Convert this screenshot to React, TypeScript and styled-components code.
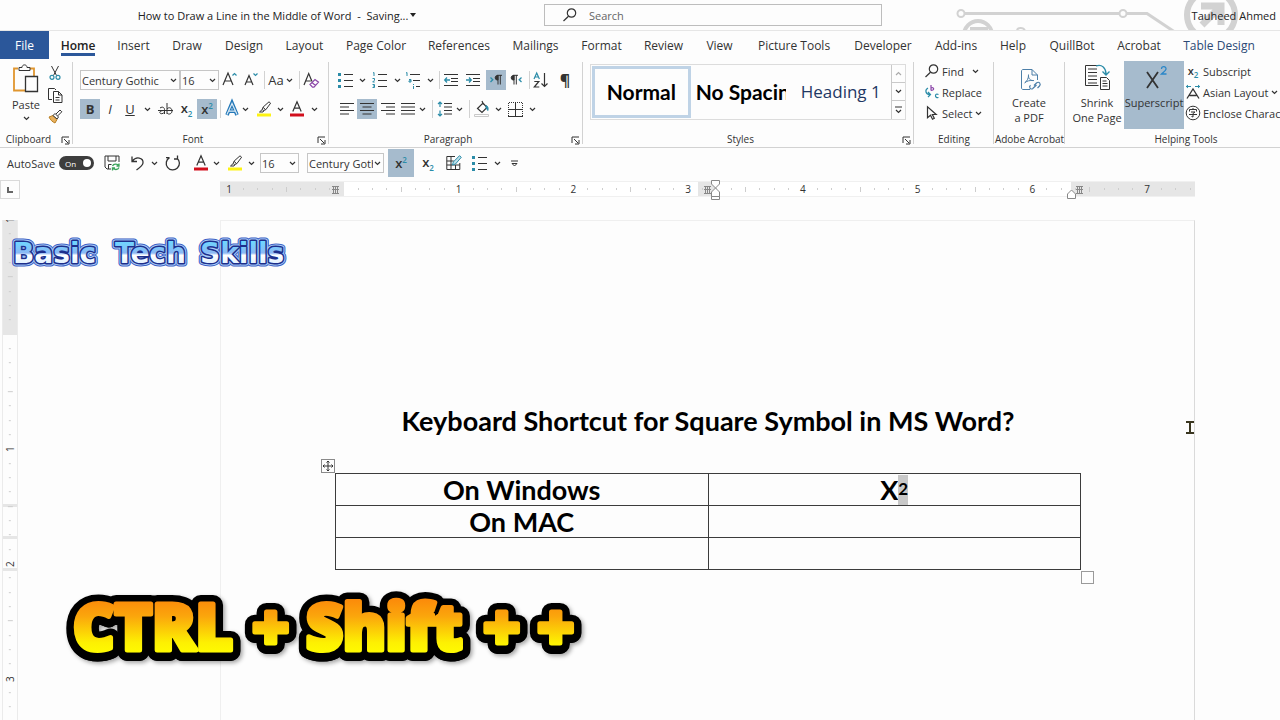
import React from 'react';
import styled, { createGlobalStyle, css } from 'styled-components';

const ink = '#333333';
const teal = '#2b8ca8';
const selected = '#a6bbcd';
const line = '#d2d2d2';
const paper = '#fdfdfd';

const GlobalStyle = createGlobalStyle`
  * { box-sizing: border-box; }
  body {
    margin: 0;
    background: ${paper};
    color: ${ink};
    font-family: "Open Sans", "Noto Sans", sans-serif;
    font-size: 11px;
    line-height: 15px;
  }
  button, input, select { font: inherit; color: inherit; margin: 0; padding: 0; }
  button { background: none; border: 0; white-space: nowrap; }
  svg { display: block; overflow: visible; flex: none; }
`;

const Window = styled.div`
  height: 100vh;
  display: flex;
  flex-direction: column;
  overflow: hidden;
  position: relative;
`;

/* ---------- title bar ---------- */

const TitleBar = styled.header`
  position: relative;
  display: grid;
  grid-template-columns: 544fr 338px 398fr;
  align-items: center;
  height: 31px;
  border-bottom: 1px solid #e6e6e6;
  overflow: hidden;
`;

const DocTitle = styled.button`
  display: flex;
  align-items: center;
  justify-content: center;
  gap: 2px;
  padding-left: 10px;
  color: #222;
  white-space: pre;
`;

const SearchBox = styled.label`
  display: flex;
  align-items: center;
  gap: 12px;
  height: 22px;
  padding-left: 18px;
  background: ${paper};
  border: 1px solid #bdbdbd;
  input {
    flex: 1;
    border: 0;
    background: none;
    outline: 0;
  }
  input::placeholder { color: #666; opacity: 1; }
`;

const Circuit = styled.svg`
  position: absolute;
  top: 0;
  right: 0;
`;

const UserName = styled.button`
  position: relative;
  justify-self: end;
  padding-right: 4px;
  color: #222;
`;

/* ---------- tabs ---------- */

const Tabs = styled.nav`
  display: flex;
  height: 30px;
  overflow: hidden;
`;

const Tab = styled.button<{ $w: number; $kind?: 'file' | 'active' | 'context' }>`
  flex: none;
  width: ${(p) => p.$w}px;
  height: 28px;
  font-size: 12px;
  ${(p) => p.$kind === 'file' && css`background: #2b579a; color: #fff;`}
  ${(p) => p.$kind === 'context' && css`color: #2c4a75;`}
  ${(p) => p.$kind === 'active' && css`
    color: #222;
    font-weight: 600;
    span { display: inline-block; height: 21px; padding-top: 3px; border-bottom: 3px solid #2b579a; }
  `}
`;

/* ---------- ribbon ---------- */

const Ribbon = styled.section`
  display: flex;
  flex: none;
  height: 87px;
  border-bottom: 1px solid ${line};
  overflow: hidden;
`;

const Group = styled.div<{ $w: number; $grow?: boolean }>`
  flex: ${(p) => (p.$grow ? '1 0' : '0 0')} ${(p) => p.$w}px;
  display: flex;
  flex-direction: column;
  position: relative;
  &::after {
    content: '';
    position: absolute;
    right: 0;
    top: 1px;
    height: 82px;
    border-right: 1px solid ${line};
  }
`;

const GroupBody = styled.div<{ $column?: boolean; $pad?: number }>`
  flex: 1;
  display: flex;
  flex-direction: ${(p) => (p.$column ? 'column' : 'row')};
  padding-left: ${(p) => p.$pad ?? 7}px;
`;

const GroupFooter = styled.div`
  display: flex;
  justify-content: center;
  height: 15px;
  font-size: 10px;
  white-space: nowrap;
  span { flex: 1; text-align: center; }
  button { padding: 2px 3px 0 4px; }
`;

const ToolRow = styled.div<{ $top?: number }>`
  display: flex;
  align-items: center;
  height: 20px;
  margin-top: ${(p) => p.$top ?? 0}px;
`;

const Tool = styled.button<{ $w?: number; $h?: number; $on?: boolean }>`
  flex: none;
  display: flex;
  align-items: center;
  justify-content: center;
  width: ${(p) => p.$w ?? 20}px;
  height: ${(p) => p.$h ?? 20}px;
  background: ${(p) => (p.$on ? selected : 'none')};
`;

const Divider = styled.span<{ $w?: number }>`
  flex: none;
  width: ${(p) => p.$w ?? 8}px;
  height: 18px;
  background: linear-gradient(${line}, ${line}) center / 1px 100% no-repeat;
`;

const SelectBox = styled.label<{ $w: number }>`
  flex: none;
  display: grid;
  align-items: center;
  width: ${(p) => p.$w}px;
  height: 20px;
  border: 1px solid #c6c6c6;
  select, svg { grid-area: 1 / 1; }
  svg { justify-self: end; margin-right: 2px; pointer-events: none; }
  select {
    appearance: none;
    width: calc(100% - 10px);
    height: 18px;
    padding-left: 1px;
    border: 0;
    background: none;
    text-overflow: clip;
  }
`;

const BigButton = styled.button<{ $w: number; $on?: boolean }>`
  display: flex;
  flex: none;
  flex-direction: column;
  align-items: center;
  width: ${(p) => p.$w}px;
  height: 68px;
  padding-top: 3px;
  background: ${(p) => (p.$on ? selected : 'none')};
  svg { margin-bottom: 3px; }
`;

const SmallStack = styled.div`
  display: flex;
  flex-direction: column;
  gap: 1px;
`;

const LabelledTool = styled.button`
  display: flex;
  align-items: center;
  gap: 3px;
  height: 20px;
`;

const Gallery = styled.div`
  flex: 1;
  display: flex;
  height: 56px;
  margin: 3px 8px 0 0;
  border: 1px solid #dcdcdc;
`;

const StyleCell = styled.button<{ $w: number; $on?: boolean; $heading?: boolean }>`
  flex: 1 1 ${(p) => p.$w}px;
  min-width: 0;
  overflow: hidden;
  margin: 1px;
  text-align: ${(p) => (p.$heading || p.$on ? 'center' : 'left')};
  border: 3px solid ${(p) => (p.$on ? '#bfd3e6' : 'transparent')};
  color: ${(p) => (p.$heading ? '#1f3864' : '#000')};
  font-family: ${(p) => (p.$heading ? '"Open Sans"' : 'Lato')}, sans-serif;
  font-weight: ${(p) => (p.$heading ? 400 : 700)};
  font-size: ${(p) => (p.$heading ? 17 : 21)}px;
  line-height: 24px;
`;

const GalleryScroll = styled.div`
  display: grid;
  grid-template-rows: 1fr 1fr 1fr;
  width: 14px;
  button { display: grid; place-items: center; border: 1px solid #c9c9c9; border-width: 0 0 1px 1px; }
  button:last-child { border-bottom: 0; }
`;

/* ---------- quick access toolbar ---------- */

const QuickAccess = styled.section`
  display: flex;
  flex: none;
  align-items: center;
  height: 30px;
  padding-left: 7px;
`;

const AutoSave = styled.label`
  display: flex;
  align-items: center;
  gap: 4px;
  width: 93px;
`;

const Switch = styled.span`
  display: flex;
  align-items: center;
  justify-content: space-between;
  width: 35px;
  height: 14px;
  padding: 0 3px 0 6px;
  border-radius: 7px;
  background: #3d3d3d;
  color: #fff;
  font-size: 8px;
  position: relative;
  input { position: absolute; inset: 0; opacity: 0; }
  &::after { content: ''; width: 8px; height: 8px; border-radius: 50%; background: #fff; }
`;

const Space = styled.span<{ $w: number }>`
  flex: none;
  width: ${(p) => p.$w}px;
`;

/* ---------- document area ---------- */

const Workspace = styled.main`
  flex: 1;
  min-height: 0;
  display: grid;
  grid-template-columns: 220px 1fr 85px;
  grid-template-rows: 42px 1fr;
`;

const TabStop = styled.button`
  width: 20px;
  height: 19px;
  margin-top: 2px;
  display: grid;
  place-items: center;
  border: 1px solid #dadada;
`;

const HRuler = styled.div`
  position: relative;
  height: 16px;
  margin-top: 3px;
  border-top: 1px solid #f0f0f0;
  border-bottom: 1px solid #f0f0f0;
  background: linear-gradient(to right, #e6e6e6 124px, #fff 124px 478px, #e6e6e6 478px 495px, #fff 495px 851px, #e6e6e6 851px);
`;

const Strip = styled.div<{ $vertical?: boolean }>`
  display: flex;
  ${(p) => p.$vertical
    ? css`flex-direction: column; height: 516px; margin-top: -7px;`
    : css`height: 14px; margin: 0 -2px 0 2px;`}
`;

const Mark = styled.span<{ $vertical?: boolean; $kind: 'number' | 'half' | 'dot' | 'none' }>`
  flex: 1;
  display: grid;
  place-items: center;
  min-width: 0;
  min-height: 0;
  font-size: 10px;
  line-height: 12px;
  ${(p) => p.$vertical && css`transform: rotate(-90deg);`}
  &::before {
    content: ${(p) => (p.$kind === 'half' || p.$kind === 'dot' ? "''" : 'none')};
    width: 1px;
    height: ${(p) => (p.$kind === 'half' ? 5 : 2)}px;
    background: #cdcdcd;
  }
`;

const RulerPin = styled.svg<{ $x: number; $y: number }>`
  position: absolute;
  left: ${(p) => p.$x}px;
  top: ${(p) => p.$y}px;
`;

const VRuler = styled.div`
  position: relative;
  width: 16px;
  margin-left: 2px;
  overflow: hidden;
  border: 1px solid #ebebeb;
  border-width: 0 1px;
  background: linear-gradient(#e6e6e6 115px, transparent 115px 284px, #e6e6e6 284px 287px, transparent 287px 316px,
    #e6e6e6 316px 319px, transparent 319px 348px, #e6e6e6 348px 351px, transparent 351px);
`;

const Sheet = styled.article`
  position: relative;
  border: 1px solid #efefef;
  border-right-color: #dadada;
  border-bottom: 0;
  padding: 182px 113px 0 114px;
  color: #000;
  font-family: Lato, "Open Sans", sans-serif;
`;

const Heading = styled.h1`
  margin: 0 0 34px;
  font-size: 27px;
  line-height: 36px;
  font-weight: 700;
  text-align: center;
  white-space: nowrap;
`;

const TableFrame = styled.div`
  position: relative;
`;

const DocTable = styled.table`
  width: 100%;
  table-layout: fixed;
  border-collapse: collapse;
  td {
    height: 32px;
    padding: 1px 0 0;
    border: 1px solid #3c3c3c;
    text-align: center;
    font-size: 27px;
    line-height: 30px;
    font-weight: 700;
  }
`;

const Power = styled.span`
  display: inline-block;
  height: 30px;
  vertical-align: top;
  background: #c8c8c8;
  font-size: 17px;
  line-height: 27px;
`;

const MoveHandle = styled.button`
  position: absolute;
  left: -14px;
  top: -14px;
  border: 1px solid #8a8a8a;
`;

const ResizeHandle = styled.span`
  position: absolute;
  right: -13px;
  bottom: -14px;
  width: 13px;
  height: 13px;
  border: 1px solid #9a9a9a;
`;

const Pointer = styled.svg`
  position: absolute;
  right: 0;
  top: 200px;
`;

const Overlay = styled.svg<{ $x: number; $y: number }>`
  position: absolute;
  left: ${(p) => p.$x}px;
  top: ${(p) => p.$y}px;
  pointer-events: none;
`;

/* ---------- icons ---------- */

type IconProps = { w?: number; h?: number; sw?: number; color?: string; children: React.ReactNode };
const Icon = ({ w = 16, h = 16, sw = 1, color = ink, children }: IconProps) => (
  <svg width={w} height={h} viewBox={`0 0 ${w} ${h}`} fill="none" stroke={color} strokeWidth={sw} aria-hidden="true">
    {children}
  </svg>
);

const Chevron = ({ up, color }: { up?: boolean; color?: string }) => (
  <Icon w={7} h={5} sw={1.2} color={color}><path d={up ? 'M1 4l2.5-2.5L6 4' : 'M1 1l2.5 2.5L6 1'} /></Icon>
);

const Caret = ({ w = 12 }: { w?: number }) => (
  <Tool $w={w} aria-label="More options"><Chevron /></Tool>
);

const Launcher = () => (
  <button aria-label="Open dialog">
    <Icon w={9} h={9}><path d="M1 7V1h7M3 3l4 4M8 4v4H4" /></Icon>
  </button>
);

const Glyph = styled.span<{ $size?: number; $bold?: boolean }>`
  font-size: ${(p) => p.$size ?? 13}px;
  font-weight: ${(p) => (p.$bold ? 700 : 400)};
  line-height: 16px;
`;

const Script = styled.span<{ $up?: boolean; $size?: number }>`
  font-size: ${(p) => p.$size ?? 13}px;
  font-weight: 600;
  line-height: 16px;
  small {
    font-size: 8px;
    line-height: 8px;
    color: ${teal};
    vertical-align: ${(p) => (p.$up ? 'super' : 'sub')};
  }
`;

const BulletsIcon = () => (
  <Icon><path d="M6 2.5h9M6 8.5h9M6 14.5h9" /><path d="M0 2.5h3M0 8.5h3M0 14.5h3" stroke={teal} strokeWidth={3} /></Icon>
);
const NumbersIcon = () => (
  <Icon><path d="M6 2.5h9M6 8.5h9M6 14.5h9" />
    <path d="M1 1l1-.5V4M.5 6.5h2v1.7L.7 10h2M.5 12.5h2v3h-2M1 14h1.5" stroke={teal} /></Icon>
);
const MultiIcon = () => (
  <Icon><path d="M5 2.5h10M8 8.5h7M11 14.5h4" />
    <path d="M1 1l1-.5V4M4 7.5h2v2.500H4v-1.200h2M8.500 12v1M8.500 14v3" stroke={teal} /></Icon>
);
const IndentIcon = ({ out }: { out?: boolean }) => (
  <Icon w={14} h={14}><path d="M0 1.500h14M7 5.500h7M7 8.500h7M0 12.500h14" />
    <path d={out ? 'M6 7H1M3 4.500L.7 7 3 9.500' : 'M0 7h5M3 4.500L5.300 7 3 9.500'} stroke={teal} strokeWidth={1.300} /></Icon>
);
const AlignIcon = ({ d }: { d: string }) => <Icon w={14} h={14} sw={1.2}><path d={d} /></Icon>;

const Pilcrow = ({ dir }: { dir?: 'ltr' | 'rtl' }) => (
  <Icon w={12} h={12}>
    <g transform={dir === 'ltr' ? 'translate(4 0)' : ''}>
      <path d="M4 1.500H3a2.300 2.300 0 000 4.500h1z" fill={ink} /><path d="M4 1v9.500M6.300 1v9.500M3 1.300h5" />
    </g>
    {dir === 'ltr' && <path d="M.5 3.500l2.300 2.200L.5 8" stroke={teal} strokeWidth={1.300} />}
    {dir === 'rtl' && <path d="M11.500 3.500L9.200 5.700 11.500 8" stroke={teal} strokeWidth={1.300} />}
  </Icon>
);

const HighlightIcon = () => (
  <Icon>
    <path d="M13 .8l1.600 1.400-4.800 6.500-2.500.8-1.100-1 .9-2.400zM7 6.300l2.700 2.400M6.200 8.500L3.500 11H7l1-1.500" />
    <path d="M1 14h14" stroke="#fdf313" strokeWidth={3} />
  </Icon>
);
const FontColorIcon = () => (
  <Icon>
    <path d="M3.800 10.500L8 .8l4.200 9.700M5.200 7.200h5.600" strokeWidth={1.200} />
    <path d="M1 14h14" stroke="#d20f1c" strokeWidth={3} />
  </Icon>
);
const EffectsIcon = () => (
  <Icon>
    <path d="M3 14L8 2l5 12M4.800 10.200h6.400" stroke="#2378b8" strokeWidth={3.600} />
    <path d="M3 13.600L8 2.500l5 11.100M4.800 10.200h6.400" stroke="#dceaf5" strokeWidth={1.200} />
  </Icon>
);
const PasteIcon = () => (
  <Icon w={28} h={30}>
    <path d="M6 4.500H2v22h11M17 4.500h5v8" stroke="#e0962f" strokeWidth={1.800} />
    <path d="M7 6.500V3.500h3c0-3.500 5-3.500 5 0h3v3z" fill={paper} />
    <path d="M13.500 12.500h12v15h-12z" fill={paper} strokeWidth={1.300} />
  </Icon>
);
const CutIcon = () => (
  <Icon w={12} h={14}>
    <path d="M2.500 0l5 9.500M9.500 0l-5 9.500" />
    <circle cx="3" cy="11.300" r="2" stroke={teal} strokeWidth={1.200} /><circle cx="9" cy="11.300" r="2" stroke={teal} strokeWidth={1.200} />
  </Icon>
);
const CopyIcon = () => (
  <Icon w={15} h={15}>
    <path d="M4 11.500H.5V.5h6L8 2" /><path d="M5.500 3.500h5l3.500 3.500v7.500H5.500zM10.500 3.500V7H14M7.500 9.500h4M7.500 12h4" />
  </Icon>
);
const PainterIcon = () => (
  <Icon w={14} h={14}>
    <path d="M1 8l4-1.500 4 4L7 14C4.500 13 2.500 11 1 8z" fill="#e8b15e" stroke="#b87f24" />
    <path d="M5 6.500L7 4.500 10.500 8 9 10zM8 5l4-4 1.800 1.800-4 4" fill={paper} />
  </Icon>
);
const ClearIcon = () => (
  <Icon>
    <path d="M1 13L5.700 1.500 9 9.500M2.800 9h5" strokeWidth={1.200} />
    <path d="M7 12.500l5-5 3.500 2.700-4.500 5H9.500zM9 10.500l3.500 3" stroke="#8b45a8" strokeWidth={1.200} />
  </Icon>
);
const SizeIcon = ({ up }: { up?: boolean }) => (
  <Icon>
    <path d={up ? 'M1 13L6 1l5 12M2.800 9h6.400' : 'M2 13L6 3.500 10 13M3.500 10h5'} strokeWidth={1.200} />
    <path d={up ? 'M10.500 3.500l2-2 2 2' : 'M10.500 1.500l2 2 2-2'} stroke={teal} strokeWidth={1.200} />
  </Icon>
);
const SortIcon = () => (
  <Icon>
    <path d="M1 7l2.700-6 2.700 6M1.900 5h3.600" stroke={teal} strokeWidth={1.200} />
    <path d="M1.300 9.500h4.500L1.300 15h5M11.500 1v13.500M8.500 11.500l3 3 3-3" strokeWidth={1.200} />
  </Icon>
);
const SpacingIcon = () => (
  <Icon><path d="M7 2.500h8M7 6h8M7 9.500h8M7 13h8" />
    <path d="M3 1v5M1 3l2-2 2 2M3 9.500V15M1 13l2 2 2-2" stroke={teal} strokeWidth={1.200} /></Icon>
);
const ShadingIcon = () => (
  <Icon>
    <path d="M3.500 7.500L9 2l4 4.500-5 5zM8 0l1.500 3.500" strokeWidth={1.200} />
    <path d="M12 4.500c2 .5 2.500 3 1.800 5L12 6.500z" fill={teal} stroke={teal} /><path d="M.5 13.500h14v2H.5z" stroke="#c9c9c9" />
  </Icon>
);
const BordersIcon = () => (
  <Icon w={15} h={15}>
    <path d="M.5 14V.5h14V14" strokeDasharray="1 1" /><path d="M0 14.500h15M7.500 1v13M1 7.500h13" />
  </Icon>
);
const LensIcon = () => <Icon w={14} h={14} sw={1.2}><circle cx="8.500" cy="5" r="4.200" /><path d="M5.500 8.200L.5 13" /></Icon>;
const ReplaceIcon = () => (
  <Icon w={14} h={14}>
    <path d="M6 0v5.500M6 3c3-1.500 4 2.500 0 2.500" stroke="#8b45a8" strokeWidth={1.200} />
    <path d="M3 3C-.5 5 .5 9.500 5 9.500M3 7l2.500 2.500L3 12M13.500 9.500c-4-2-4 4 0 3" stroke={teal} strokeWidth={1.200} />
  </Icon>
);
const SelectIcon = () => <Icon w={14} h={14} sw={1.2}><path d="M2.500.8v11l3-2.600 2 4 1.800-.9-2-3.800h3.900z" /></Icon>;
const PdfIcon = () => (
  <Icon w={22} h={24} color="#4d7fa8">
    <path d="M10 21.500H3c-.8 0-1.500-.700-1.500-1.500V3c0-.8.7-1.500 1.500-1.500h9L17.500 7v5M12 1.500V7h5.500" />
    <path d="M4.500 15c2-1 4.500-5 4-8.500M8.500 8c0 3.500 3 5 5.500 4.500M5 14.500c2-1.500 5-2.300 8-2" />
    <path d="M14 17.500l2.500-2.500c1-1 2.500-1 3.200 0s.8 2-.2 3l-2 2M16.500 17l-3.500 3.300c-1 1-2.400.9-3-.1-.7-1-.5-2 .5-2.900" strokeWidth={1.200} />
  </Icon>
);
const ShrinkIcon = () => (
  <Icon w={27} h={27}>
    <path d="M14 1.500H1.500v20h13" /><path d="M4 5h9M4 8.500h9M4 12h9M4 15.500h9M4 19h9" />
    <path d="M16.500 13.500h6l3 3v9h-9zM18.500 17h4M18.500 19.500h5M18.500 22h5" />
    <path d="M12 2c6-2 10 2 10 8M18.500 7.500L22 11l3.500-3.500" stroke={teal} strokeWidth={1.300} />
  </Icon>
);
const SuperIcon = () => (
  <Icon w={26} h={27}>
    <path d="M6 8l11 16M17 8L6 24" strokeWidth={1.800} />
    <path d="M20.500 5c0-3.500 5-3 4.500.2-.3 1.800-2.500 2.800-4.500 4.800h5" stroke="#2a86c8" strokeWidth={1.300} />
  </Icon>
);
const AsianIcon = () => (
  <Icon w={14} h={14}>
    <path d="M1 13.500L7 4l6 9.500M3.500 10.500h7" strokeWidth={1.300} />
    <path d="M5 1.500H0M2 0L.3 1.500 2 3M9 1.500h5M12 0l1.700 1.500L12 3" stroke={teal} />
  </Icon>
);
const EncloseIcon = () => (
  <Icon w={14} h={14}>
    <circle cx="7" cy="7" r="6.800" /><path d="M7 2v1.500M3.500 5.500v-2h7v2M5 6h4L7 7.500V11l-1.500-.5M3 8.500h8" />
  </Icon>
);
const SaveIcon = () => (
  <Icon>
    <path d="M7 14H3L1 12V1h14v6M4 1v5h8V1M4.500 14V9.500h3" />
    <path d="M8.500 11c1-2.500 5-2.500 6.300-.3M15 8.500v2.500h-2.500M15 12.500c-1 2.700-5 2.500-6.300.5M8.500 15.500V13H11" stroke="#3da35b" strokeWidth={1.300} />
  </Icon>
);
const UndoIcon = () => <Icon sw={1.3}><path d="M2 1.500v5h5M2.300 6.200C6 1 13.500 2.500 13 8c-.2 2.500-3 4.500-6.500 7" /></Icon>;
const RedoIcon = () => <Icon sw={1.300}><path d="M12 3.200A6.600 6.600 0 114.500 2.600M12.500.5V4H9M4.500 2.600H1" /></Icon>;
const DrawTableIcon = () => (
  <Icon>
    <path d="M9 1.500H.8v13h13V8M.8 6h7M.8 10h13M5 1.500v13M9.500 10v4.500" />
    <path d="M6.500 10l.8-3L13.500.7l1.800 1.600L9.500 9z" stroke={teal} fill="#bfe0ea" />
  </Icon>
);
const StrikeIcon = () => (
  <Icon w={15} h={13}>
    <path d="M2 5c3-2 4.500 0 4.500 1.500V11M6.500 7.500C4 7.500 1.800 8 1.800 9.500s3 2 4.700-.5M9 0v11M9 6c2-2.500 5-1 5 2s-3.500 4-5 2" />
    <path d="M0 7.500h15" />
  </Icon>
);

const Combo = ({ w, value, label }: { w: number; value: string; label: string }) => (
  <SelectBox $w={w}>
    <select aria-label={label} defaultValue={value}><option>{value}</option></select>
    <Chevron />
  </SelectBox>
);

const Footer = ({ text, launcher }: { text: string; launcher?: boolean }) => (
  <GroupFooter><span>{text}</span>{launcher && <Launcher />}</GroupFooter>
);

const tabs: [string, number, ('file' | 'active' | 'context')?][] = [
  ['File', 49, 'file'], ['Home', 58, 'active'], ['Insert', 53], ['Draw', 54], ['Design', 60], ['Layout', 61],
  ['Page Color', 82], ['References', 84], ['Mailings', 69], ['Format', 63], ['Review', 61], ['View', 51],
  ['Picture Tools', 98], ['Developer', 80], ['Add-ins', 66], ['Help', 48], ['QuillBot', 70], ['Acrobat', 64],
  ['Table Design', 96, 'context'],
];

const Marks = ({ count, zero, vertical }: { count: number; zero: number; vertical?: boolean }) => (
  <Strip $vertical={vertical}>
    {Array.from({ length: count }, (_, i) => {
      const eighths = Math.abs(i - zero);
      const kind = eighths === 0 ? 'none' : eighths % 8 === 0 ? 'number' : eighths % 4 === 0 ? 'half' : 'dot';
      return <Mark key={i} $vertical={vertical} $kind={kind}>{kind === 'number' ? eighths / 8 : null}</Mark>;
    })}
  </Strip>
);

const ColumnGrip = ({ x }: { x: number }) => (
  <RulerPin $x={x} $y={4} width="7" height="8" viewBox="0 0 7 8" stroke="#888" fill="none">
    <path d="M0 .5h7M0 3.500h7M0 7.500h7M1.500 0v8M3.500 0v8M5.500 0v8" />
  </RulerPin>
);

export default function App() {
  return (
    <Window>
      <GlobalStyle />
      <TitleBar>
        <Circuit width="324" height="31" viewBox="0 0 324 31" fill="none" stroke="#d2d2d2" strokeWidth="3" aria-hidden="true">
          <circle cx="5" cy="13.500" r="3.500" strokeWidth="2" /><path d="M9 13.500h154M171 13.500h20l27 18" />
          <circle cx="167" cy="13.500" r="3.500" strokeWidth="2" />
          <circle cx="22" cy="35" r="14" strokeWidth="4" /><path d="M14 29h16v6" strokeWidth="4" />
          <path d="M61 31c0-4 7-4 8 0h90" strokeWidth="2" />
          <circle cx="255" cy="15" r="24" strokeWidth="6" />
          <path d="M245 6h20v19M264 7l-18 18" strokeWidth="7" />
        </Circuit>
        <DocTitle>How to Draw a Line in the Middle of Word  -  Saving...
          <svg width="6" height="4" viewBox="0 0 6 4"><path d="M0 0h6L3 4z" fill="#222" /></svg>
        </DocTitle>
        <SearchBox><LensIcon /><input type="search" placeholder="Search" aria-label="Search" /></SearchBox>
        <UserName>Tauheed Ahmed</UserName>
      </TitleBar>

      <Tabs>
        {tabs.map(([name, w, kind]) => <Tab key={name} $w={w} $kind={kind}><span>{name}</span></Tab>)}
      </Tabs>

      <Ribbon>
        <Group $w={73}>
          <GroupBody $pad={5}>
            <BigButton $w={42}><PasteIcon />Paste<Icon w={7} h={10} sw={1.2}><path d="M1 5l2.500 2.500L6 5" /></Icon></BigButton>
            <Space $w={1} />
            <SmallStack>
              <Tool $w={14} $h={24} aria-label="Cut"><CutIcon /></Tool>
              <Tool $w={14} $h={18} aria-label="Copy"><CopyIcon /></Tool>
              <Tool $w={14} $h={22} aria-label="Format painter"><PainterIcon /></Tool>
            </SmallStack>
          </GroupBody>
          <Footer text="Clipboard" launcher />
        </Group>

        <Group $w={256}>
          <GroupBody $column>
            <ToolRow $top={9}>
              <Combo w={100} value="Century Gothic" label="Font" />
              <Combo w={39} value="16" label="Font size" />
              <Tool $w={22} aria-label="Grow font"><SizeIcon up /></Tool>
              <Tool aria-label="Shrink font"><SizeIcon /></Tool>
              <Divider $w={7} />
              <Tool $w={16}><Glyph>Aa</Glyph></Tool><Caret w={11} />
              <Divider />
              <Tool $w={16} aria-label="Clear formatting"><ClearIcon /></Tool>
            </ToolRow>
            <ToolRow $top={9}>
              <Tool $on><Glyph $bold>B</Glyph></Tool>
              <Tool><Glyph as="em">I</Glyph></Tool>
              <Tool><Glyph as="u">U</Glyph></Tool><Caret w={14} />
              <Tool $w={22} aria-label="Strikethrough"><StrikeIcon /></Tool>
              <Tool $w={21}><Script>x<small>2</small></Script></Tool>
              <Tool $on><Script $up>x<small>2</small></Script></Tool>
              <Divider $w={7} />
              <Tool $w={15} aria-label="Text effects"><EffectsIcon /></Tool><Caret />
              <Tool $w={26} aria-label="Highlight"><HighlightIcon /></Tool><Caret w={7} />
              <Tool $w={26} aria-label="Font colour"><FontColorIcon /></Tool><Caret w={9} />
            </ToolRow>
          </GroupBody>
          <Footer text="Font" launcher />
        </Group>

        <Group $w={254}>
          <GroupBody $column>
            <ToolRow $top={9}>
              <Tool aria-label="Bullets"><BulletsIcon /></Tool><Caret />
              <Tool $w={24} aria-label="Numbering"><NumbersIcon /></Tool><Caret w={10} />
              <Tool $w={22} aria-label="Multilevel list"><MultiIcon /></Tool><Caret />
              <Divider $w={7} />
              <Tool $w={16} aria-label="Decrease indent"><IndentIcon out /></Tool>
              <Tool $w={27} aria-label="Increase indent"><IndentIcon /></Tool>
              <Tool $on aria-label="Left to right"><Pilcrow dir="ltr" /></Tool>
              <Tool aria-label="Right to left"><Pilcrow dir="rtl" /></Tool>
              <Divider $w={7} />
              <Tool $w={16} aria-label="Sort"><SortIcon /></Tool>
              <Tool $w={32}><Glyph $size={16} $bold>¶</Glyph></Tool>
            </ToolRow>
            <ToolRow $top={9}>
              <Tool $w={21} aria-label="Align left"><AlignIcon d="M0 1.500h14M0 5h9M0 8.500h14M0 12h9" /></Tool>
              <Tool $on aria-label="Center"><AlignIcon d="M0 1.500h14M2.500 5h9M0 8.500h14M2.500 12h9" /></Tool>
              <Tool $w={22} aria-label="Align right"><AlignIcon d="M0 1.500h14M5 5h9M0 8.500h14M5 12h9" /></Tool>
              <Tool $w={18} aria-label="Justify"><AlignIcon d="M0 1.500h14M0 5h14M0 8.500h14M0 12h14" /></Tool>
              <Caret w={11} />
              <Divider />
              <Tool $w={18} aria-label="Line spacing"><SpacingIcon /></Tool><Caret w={11} />
              <Divider />
              <Tool $w={18} aria-label="Shading"><ShadingIcon /></Tool><Caret w={14} />
              <Tool aria-label="Borders"><BordersIcon /></Tool><Caret w={14} />
            </ToolRow>
          </GroupBody>
          <Footer text="Paragraph" launcher />
        </Group>

        <Group $w={331} $grow>
          <GroupBody>
            <Gallery>
              <StyleCell $w={99} $on>Normal</StyleCell>
              <StyleCell $w={97}>No Spacing</StyleCell>
              <StyleCell $w={99} $heading>Heading 1</StyleCell>
              <GalleryScroll>
                <button aria-label="Previous styles"><Chevron up color="#aaa" /></button>
                <button aria-label="Next styles"><Chevron /></button>
                <button aria-label="All styles"><Icon w={7} h={8} sw={1.2}><path d="M0 1h7M1 4l2.500 2.500L6 4" /></Icon></button>
              </GalleryScroll>
            </Gallery>
          </GroupBody>
          <Footer text="Styles" launcher />
        </Group>

        <Group $w={80}>
          <GroupBody $pad={11}>
            <SmallStack>
              <LabelledTool><LensIcon />Find<Space $w={2} /><Chevron /></LabelledTool>
              <LabelledTool><ReplaceIcon />Replace</LabelledTool>
              <LabelledTool><SelectIcon />Select<Chevron /></LabelledTool>
            </SmallStack>
          </GroupBody>
          <Footer text="Editing" />
        </Group>

        <Group $w={71}>
          <GroupBody $pad={0}>
            <BigButton $w={70}><Icon w={22} h={28}><g transform="translate(2 4)"><PdfIcon /></g></Icon><span>Create<br />a PDF</span></BigButton>
          </GroupBody>
          <Footer text="Adobe Acrobat" />
        </Group>

        <Group $w={242}>
          <GroupBody $pad={5}>
            <BigButton $w={54}><Icon w={27} h={28}><ShrinkIcon /></Icon><span>Shrink<br />One Page</span></BigButton>
            <BigButton $w={60} $on><Icon w={26} h={28}><SuperIcon /></Icon>Superscript</BigButton>
            <Space $w={2} />
            <SmallStack>
              <LabelledTool><Tool as="span" $w={14}><Script $size={11}>x<small>2</small></Script></Tool>Subscript</LabelledTool>
              <LabelledTool><AsianIcon />Asian Layout<Chevron /></LabelledTool>
              <LabelledTool><EncloseIcon />Enclose Characters</LabelledTool>
            </SmallStack>
          </GroupBody>
          <Footer text="Helping Tools" />
        </Group>
      </Ribbon>

      <QuickAccess>
        <AutoSave>AutoSave<Switch>On<input type="checkbox" defaultChecked aria-label="AutoSave" /></Switch></AutoSave>
        <Tool $w={24} aria-label="Save"><SaveIcon /></Tool>
        <Tool $w={28} aria-label="Undo"><UndoIcon /></Tool><Caret w={4} />
        <Tool $w={34} aria-label="Redo"><RedoIcon /></Tool>
        <Tool $w={22} aria-label="Font colour"><FontColorIcon /></Tool><Caret w={8} />
        <Tool $w={30} aria-label="Highlight"><HighlightIcon /></Tool><Caret w={2} />
        <Space $w={8} />
        <Combo w={39} value="16" label="Quick font size" />
        <Space $w={8} />
        <Combo w={77} value="Century Gothic" label="Quick font" />
        <Space $w={4} />
        <Tool $w={26} $h={28} $on><Script $up>x<small>2</small></Script></Tool>
        <Tool $w={28}><Script>x<small>2</small></Script></Tool>
        <Tool $w={24} aria-label="Draw table"><DrawTableIcon /></Tool>
        <Tool $w={28} aria-label="Bullets"><BulletsIcon /></Tool><Caret w={6} />
        <Tool $w={28} aria-label="Customize toolbar"><Icon w={7} h={7}><path d="M0 1h7M1 3.500L3.500 6 6 3.500z" /></Icon></Tool>
      </QuickAccess>

      <Workspace>
        <TabStop aria-label="Tab stop"><Icon w={6} h={6} sw={2} color="#666"><path d="M1 0v5h5" /></Icon></TabStop>
        <HRuler>
          <Marks count={68} zero={8} />
          <ColumnGrip x={112} />
          <ColumnGrip x={484} />
          <ColumnGrip x={856} />
          <RulerPin $x={491} $y={-2} width="9" height="20" viewBox="0 0 9 20" fill="#fff" stroke="#888">
            <path d="M.5.5h8V4L4.500 8 .5 4zM.5 16.500V12l4-4 4 4v4.500zM.5 16.500h8v3h-8z" />
          </RulerPin>
          <RulerPin $x={847} $y={8} width="9" height="9" viewBox="0 0 9 9" fill="#fff" stroke="#888">
            <path d="M.5 8.500V4l4-4 4 4v4.500z" />
          </RulerPin>
        </HRuler>
        <span />
        <VRuler><Marks count={36} zero={8} vertical /></VRuler>
        <Sheet>
          <Heading>Keyboard Shortcut for Square Symbol in MS Word?</Heading>
          <TableFrame>
            <MoveHandle aria-label="Move table">
              <Icon w={12} h={12}><path d="M6 1v10M1 6h10M4.500 2.500L6 1l1.500 1.500M4.500 9.500L6 11l1.500-1.500M2.500 4.500L1 6l1.500 1.500M9.500 4.500L11 6 9.500 7.500" /></Icon>
            </MoveHandle>
            <DocTable>
              <tbody>
                <tr><td>On Windows</td><td>X<Power>2</Power></td></tr>
                <tr><td>On MAC</td><td /></tr>
                <tr><td /><td /></tr>
              </tbody>
            </DocTable>
            <ResizeHandle />
          </TableFrame>
          <Pointer width="8" height="13" viewBox="0 0 8 13" stroke="#3a3620" strokeWidth="2" fill="none" aria-hidden="true">
            <path d="M0 1h8M0 12h8M4 1v11" />
          </Pointer>
        </Sheet>
      </Workspace>

      <Overlay $x={8} $y={232} width="288" height="42" viewBox="0 0 288 42" fontFamily="'DejaVu Sans', sans-serif" fontWeight="700" fontSize="28" strokeLinejoin="round">
        <defs>
          <linearGradient id="sky" gradientUnits="userSpaceOnUse" x1="0" y1="10" x2="0" y2="32">
            <stop offset="0" stopColor="#6fd6ff" /><stop offset=".5" stopColor="#8cb8f4" /><stop offset=".6" stopColor="#ffffff" /><stop offset="1" stopColor="#dff0ff" />
          </linearGradient>
        </defs>
        <use href="#channel" fill="none" stroke="#3d5fc4" strokeWidth="7" />
        <use href="#channel" fill="none" stroke="#a9cdf8" strokeWidth="5" />
        <use href="#channel" fill="none" stroke="#1d2f8c" strokeWidth="3" />
        <g fill="url(#sky)">
          <text id="channel" y="31"><tspan x="5">Basic </tspan><tspan x="107">Tech </tspan><tspan x="192">Skills</tspan></text>
        </g>
      </Overlay>

      <Overlay $x={60} $y={581} width="540" height="90" viewBox="0 0 540 90" fontFamily="'Open Sans', sans-serif" fontWeight="800" fontSize="64" strokeLinejoin="round">
        <defs>
          <linearGradient id="sun" gradientUnits="userSpaceOnUse" x1="0" y1="18" x2="0" y2="76">
            <stop offset="0" stopColor="#fb8a0a" /><stop offset=".3" stopColor="#fba60c" /><stop offset=".75" stopColor="#fdf002" /><stop offset="1" stopColor="#ffff00" />
          </linearGradient>
        </defs>
        <g style={{ filter: 'drop-shadow(2px 2px 2px rgba(0,0,0,.35))' }}>
          <use href="#shortcut" y="1" fill="#000" stroke="#000" strokeWidth="20" />
          <use href="#shortcut" y="2" fill="#000" stroke="#000" strokeWidth="18" />
        </g>
        <g fill="url(#sun)" stroke="url(#sun)" strokeWidth="5">
          <text id="shortcut" y="69">
            <tspan x="13">CTRL</tspan><tspan x="192">+</tspan><tspan x="246">Shift</tspan><tspan x="423">+</tspan><tspan x="477">+</tspan>
          </text>
        </g>
      </Overlay>
    </Window>
  );
}
